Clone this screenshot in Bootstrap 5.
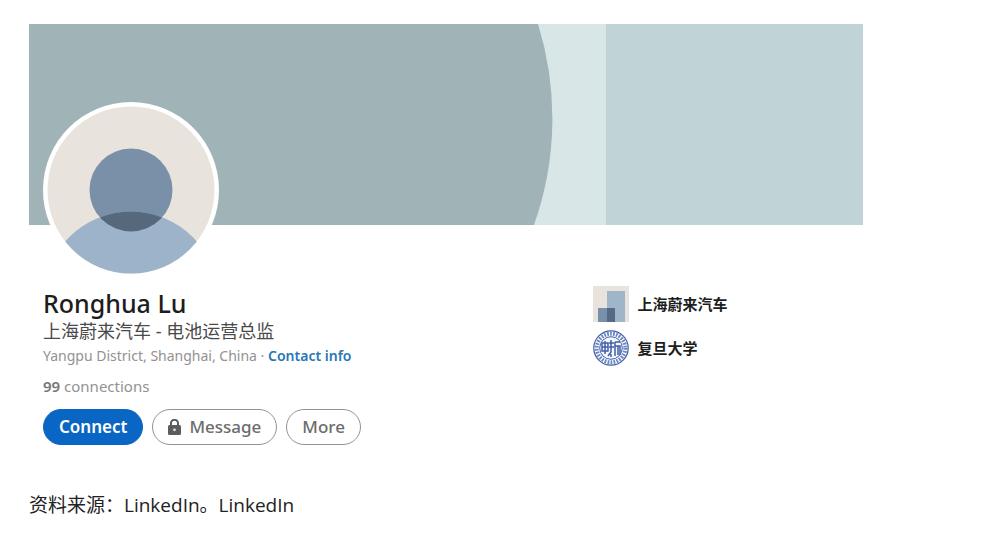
<!DOCTYPE html>
<html lang="zh-CN">
<head>
<meta charset="utf-8">
<meta name="viewport" content="width=device-width, initial-scale=1">
<title>Ronghua Lu</title>
<link href="https://cdn.jsdelivr.net/npm/bootstrap@5.3.0/dist/css/bootstrap.min.css" rel="stylesheet">
<style>
  body { font-family: "Noto Sans", "Noto Sans CJK SC", sans-serif; color: #222; background: #fff; }
  .page { padding: 24px 29px 16px; }
  .profile { max-width: 834px; }
  .profile-body { padding: 0 14px; }
  .avatar { width: 176px; height: 176px; margin-top: -123px; }
  .details { display: grid; grid-template-columns: 15fr 7fr; padding-top: 8px; }
  .person { font-size: 25px; line-height: 34px; font-weight: 500; color: #1d1d1d; }
  .headline { font-size: 18px; line-height: 22px; color: #4a4a4a; }
  .place { font-size: 14px; line-height: 28px; color: #929292; }
  .place a { color: #2a76b8; font-weight: 600; }
  .links { font-size: 15px; line-height: 32px; color: #929292; }
  .links strong { font-weight: 600; color: #777; }
  .actions { gap: 9px; padding-top: 7px; }
  .pill { height: 36px; padding: 0 15px; font-size: 17px; line-height: 34px; font-weight: 500; border: 1px solid #929292; color: #6c6c6c; background: #fff; }
  .pill-main { background: #0966c4; border-color: #0966c4; color: #fff; font-weight: 600; }
  .orgs { gap: 8px; }
  .org { gap: 9px; font-size: 15px; line-height: 36px; font-weight: 700; color: #1d1d1d; }
  .source { margin-top: 45px; font-family: "Open Sans", "Noto Sans CJK SC", sans-serif; font-size: 19px; line-height: 30px; }
</style>
</head>
<body>
<main class="page">
  <section class="profile">
    <svg class="d-block w-100" viewBox="0 0 834 201" aria-hidden="true">
      <rect width="834" height="201" fill="#c0d3d7"/>
      <rect width="577" height="201" fill="#d9e6e8"/>
      <path d="M0 0H509A318 318 0 0 1 505 201H0Z" fill="#a0b3b7"/>
    </svg>
    <div class="profile-body">
      <svg class="avatar d-block position-relative" viewBox="0 0 176 176" role="img" aria-label="Ronghua Lu">
        <defs>
          <clipPath id="face"><circle cx="88" cy="88" r="83.5"/></clipPath>
          <clipPath id="head"><circle cx="88" cy="88" r="41.5"/></clipPath>
        </defs>
        <circle cx="88" cy="88" r="88" fill="#fff"/>
        <g clip-path="url(#face)">
          <rect width="176" height="176" fill="#e8e3dd"/>
          <circle cx="88" cy="88" r="41.5" fill="#7a90a9"/>
          <circle cx="88" cy="197" r="87.5" fill="#9db3c9"/>
          <circle cx="88" cy="197" r="87.5" fill="#56687b" clip-path="url(#head)"/>
        </g>
      </svg>
      <div class="details">
        <div>
          <h1 class="person mb-0">Ronghua Lu</h1>
          <p class="headline mb-0">上海蔚来汽车 - 电池运营总监</p>
          <p class="place mb-0">Yangpu District, Shanghai, China · <a class="text-decoration-none" href="#contact">Contact info</a></p>
          <p class="links mb-0"><strong>99</strong> connections</p>
          <div class="actions d-flex flex-wrap">
            <button type="button" class="btn rounded-pill pill pill-main">Connect</button>
            <button type="button" class="btn rounded-pill pill d-flex align-items-center gap-2">
              <svg width="13" height="16" viewBox="0 0 13 16" aria-hidden="true"><path d="M3 7V4.2a3.5 3.5 0 0 1 7 0V7" fill="none" stroke="#5c5c5c" stroke-width="2"/><rect y="6" width="13" height="10" rx="1.5" fill="#5c5c5c"/><circle cx="6.5" cy="10.8" r="1.4" fill="#ddd"/></svg>
              <span>Message</span>
            </button>
            <button type="button" class="btn rounded-pill pill">More</button>
          </div>
        </div>
        <ul class="orgs list-unstyled d-flex flex-column mb-0">
          <li class="org d-flex align-items-center">
            <svg width="36" height="36" viewBox="0 0 36 36" aria-hidden="true"><rect width="36" height="36" fill="#e8e4dd"/><rect x="14" y="5" width="18" height="31" fill="#9fb5ca"/><rect x="5" y="22" width="9" height="14" fill="#7990aa"/><rect x="14" y="22" width="8" height="14" fill="#566b83"/></svg>
            <span>上海蔚来汽车</span>
          </li>
          <li class="org d-flex align-items-center">
            <svg width="36" height="36" viewBox="0 0 36 36" fill="none" stroke="#405fa8" aria-hidden="true">
              <circle cx="18" cy="18" r="17.2" fill="#fff" stroke-width="1.2"/>
              <circle cx="18" cy="18" r="14.3" stroke="#6f88c2" stroke-width="4" stroke-dasharray="1.8 1.2"/>
              <circle cx="18" cy="18" r="11.3" fill="#f4f7fd" stroke-width="1"/>
              <path d="M9 13h6v8H9zM9 17h6M12 11v13M18 10v12l-3 4M16 13h5M16 17h5M22 12h5M22 12v14M22 16h5v9M25 16v9M18 24v3" stroke-width="1.5"/>
            </svg>
            <span>复旦大学</span>
          </li>
        </ul>
      </div>
    </div>
  </section>
  <p class="source mb-0">资料来源：LinkedIn。LinkedIn</p>
</main>
<script src="https://cdn.jsdelivr.net/npm/bootstrap@5.3.0/dist/js/bootstrap.bundle.min.js"></script>
</body>
</html>
